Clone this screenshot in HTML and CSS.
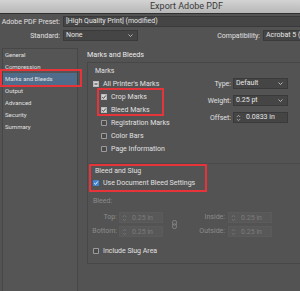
FILE: index.html
```html
<!DOCTYPE html>
<html>
<head>
<meta charset="utf-8">
<title>Export Adobe PDF</title>
<link rel="stylesheet" href="styles.css">
</head>
<body>
<div class="dialog">
  <div class="titlebar">Export Adobe PDF</div>

  <div class="toprow row1">
    <span class="tlabel">Adobe PDF Preset:</span>
    <div class="field preset">[High Quality Print] (modified)</div>
  </div>

  <div class="toprow row2">
    <span class="tlabel">Standard:</span>
    <div class="field select std"><span>None</span><svg class="chev" width="5" height="3" viewBox="0 0 5 3"><path d="M0.5 0.5 L2.5 2.5 L4.5 0.5" fill="none" stroke="#d0d0d0" stroke-width="0.8"/></svg></div>
    <span class="compat-label">Compatibility:</span>
    <div class="field select compat"><span>Acrobat 5 (PDF 1.4)</span></div>
  </div>

  <div class="main">
    <ul class="sidebar">
      <li>General</li>
      <li>Compression</li>
      <li class="sel">Marks and Bleeds</li>
      <li>Output</li>
      <li>Advanced</li>
      <li>Security</li>
      <li>Summary</li>
    </ul>

    <div class="content">
      <div class="heading">Marks and Bleeds</div>
      <div class="box">
        <div class="marks">
          <div class="marks-left">
            <div class="group-label">Marks</div>
            <div class="check"><span class="cb cb-light"><svg width="6" height="6" viewBox="0 0 6 6"><path d="M1.5 3 H4.5" stroke="#333" stroke-width="1"/></svg></span>All Printer's Marks</div>
            <div class="hl hl-marks">
              <div class="check sub"><span class="cb cb-light"><svg width="6" height="6" viewBox="0 0 6 6"><path d="M1.2 3.1 L2.5 4.4 L4.8 1.5" fill="none" stroke="#333" stroke-width="0.9"/></svg></span>Crop Marks</div>
              <div class="check sub"><span class="cb cb-light"><svg width="6" height="6" viewBox="0 0 6 6"><path d="M1.2 3.1 L2.5 4.4 L4.8 1.5" fill="none" stroke="#333" stroke-width="0.9"/></svg></span>Bleed Marks</div>
            </div>
            <div class="check sub"><span class="cb"></span>Registration Marks</div>
            <div class="check sub"><span class="cb"></span>Color Bars</div>
            <div class="check sub"><span class="cb"></span>Page Information</div>
          </div>
          <div class="marks-right">
            <div class="frow">
              <span class="flabel">Type:</span>
              <div class="field select w55"><span>Default</span><svg width="5" height="3" viewBox="0 0 5 3"><path d="M0.5 0.5 L2.5 2.5 L4.5 0.5" fill="none" stroke="#d0d0d0" stroke-width="0.8"/></svg></div>
            </div>
            <div class="frow">
              <span class="flabel">Weight:</span>
              <div class="field select w55"><span>0.25 pt</span><svg width="5" height="3" viewBox="0 0 5 3"><path d="M0.5 0.5 L2.5 2.5 L4.5 0.5" fill="none" stroke="#d0d0d0" stroke-width="0.8"/></svg></div>
            </div>
            <div class="frow">
              <span class="flabel">Offset:</span>
              <div class="field spinfield w55"><span class="spin spin-on"><svg width="5" height="8" viewBox="0 0 5 8"><path d="M0.8 3 L2.5 1.3 L4.2 3 M0.8 5 L2.5 6.7 L4.2 5" fill="none" stroke="#bdbdbd" stroke-width="0.8"/></svg></span><span>0.0833 in</span></div>
            </div>
          </div>
        </div>

        <div class="bleed">
          <div class="hl hl-bleed">
            <div class="group-label gl-bleed">Bleed and Slug</div>
            <div class="check bcheck"><span class="cb cb-blue"><svg width="6" height="6" viewBox="0 0 6 6"><path d="M1.2 3.1 L2.5 4.4 L4.8 1.5" fill="none" stroke="#fff" stroke-width="0.9"/></svg></span>Use Document Bleed Settings</div>
          </div>
          <div class="bleed-label">Bleed:</div>
          <div class="bleed-grid">
            <span class="blabel">Top:</span>
            <div class="dis"><span class="spin"><svg width="5" height="8" viewBox="0 0 5 8"><path d="M0.8 3 L2.5 1.3 L4.2 3 M0.8 5 L2.5 6.7 L4.2 5" fill="none" stroke="#7a7a7a" stroke-width="0.8"/></svg></span><span>0.25 in</span></div>
            <div class="chain"><svg width="5" height="9" viewBox="0 0 5 9"><rect x="0.5" y="0.5" width="4" height="4.6" rx="1.6" fill="none" stroke="#8a8a8a" stroke-width="0.8"/><rect x="0.5" y="3.9" width="4" height="4.6" rx="1.6" fill="none" stroke="#8a8a8a" stroke-width="0.8"/></svg></div>
            <span class="blabel wide">Inside:</span>
            <div class="dis"><span class="spin"><svg width="5" height="8" viewBox="0 0 5 8"><path d="M0.8 3 L2.5 1.3 L4.2 3 M0.8 5 L2.5 6.7 L4.2 5" fill="none" stroke="#7a7a7a" stroke-width="0.8"/></svg></span><span>0.25 in</span></div>
            <span class="blabel">Bottom:</span>
            <div class="dis"><span class="spin"><svg width="5" height="8" viewBox="0 0 5 8"><path d="M0.8 3 L2.5 1.3 L4.2 3 M0.8 5 L2.5 6.7 L4.2 5" fill="none" stroke="#7a7a7a" stroke-width="0.8"/></svg></span><span>0.25 in</span></div>
            <span class="blabel wide">Outside:</span>
            <div class="dis"><span class="spin"><svg width="5" height="8" viewBox="0 0 5 8"><path d="M0.8 3 L2.5 1.3 L4.2 3 M0.8 5 L2.5 6.7 L4.2 5" fill="none" stroke="#7a7a7a" stroke-width="0.8"/></svg></span><span>0.25 in</span></div>
          </div>
          <div class="check slug"><span class="cb"></span>Include Slug Area</div>
        </div>
      </div>
    </div>
  </div>
</div>
</body>
</html>
```

FILE: styles.css
```css
* { box-sizing: border-box; margin: 0; padding: 0; }
html, body { width: 300px; height: 291px; overflow: hidden; }
body {
  background: #535353;
  font-family: Roboto, "Liberation Sans", sans-serif;
  font-size: 7px;
  color: #e0e0e0;
}
.dialog { width: 300px; height: 291px; overflow: hidden; }

.titlebar {
  height: 14px;
  line-height: 13px;
  padding-left: 150px;
  font-size: 9px;
  color: #3a3a3a;
  background: linear-gradient(#d3d3d3, #b7b7b7);
  border-bottom: 1px solid #2f2f2f;
}

.toprow { display: flex; align-items: center; height: 11px; white-space: nowrap; }
.row1 { margin-top: 2px; }
.row2 { margin-top: 3px; }
.tlabel { width: 60px; flex-shrink: 0; text-align: right; margin-right: 3px; }

.field {
  height: 11px;
  line-height: 9px;
  border: 1px solid #3a3a3a;
  background: #454545;
  padding-left: 2px;
  flex-shrink: 0;
  white-space: nowrap;
  overflow: hidden;
  color: #e6e6e6;
}
.preset { width: 260px; }
.select { display: flex; align-items: center; justify-content: space-between; padding-right: 4px; }
.std { width: 75px; }
.compat-label { width: 44px; flex-shrink: 0; text-align: right; margin-left: 78px; margin-right: 3px; }
.compat { width: 80px; }

.main { display: flex; align-items: flex-start; margin-top: 7px; }

.sidebar {
  list-style: none;
  margin-left: 2px;
  width: 76px;
  height: 250px;
  flex-shrink: 0;
  border: 1px solid #474747;
  background: #555555;
  font-size: 6px;
}
.sidebar li { height: 12px; line-height: 12px; padding-left: 2px; white-space: nowrap; }
.sidebar .sel { background: #4f6c8b; position: relative; }
.sidebar .sel::after {
  content: "";
  position: absolute;
  left: -3px; right: -5px; top: -4px; bottom: -2px;
  border: 2px solid #e6343a;
}

.content { margin-left: 9px; flex: 1; min-width: 0; }
.heading { height: 14px; line-height: 14px; font-size: 7.2px; color: #ebebeb; }
.box {
  height: 202px;
  border: 1px solid #474747;
  border-right: none;
}

.marks { display: flex; height: 100px; }
.marks-left { width: 103px; flex-shrink: 0; padding-top: 2px; }
.group-label { height: 12px; line-height: 12px; padding-left: 7px; }
.check { display: flex; align-items: center; height: 13px; padding-left: 5px; white-space: nowrap; }
.check.sub { padding-left: 13px; }

.cb {
  width: 6px; height: 6px;
  flex-shrink: 0;
  margin-right: 4px;
  border-radius: 1px;
  background: #4a4a4a;
  box-shadow: inset 0 0 0 1px #9c9c9c;
  display: flex;
}
.cb-light { background: #d6d6d6; box-shadow: inset 0 0 0 1px #b9b9b9; }
.cb-blue { background: #3d84d6; box-shadow: none; }

.hl { position: relative; }
.hl-marks::after {
  content: "";
  position: absolute;
  left: 9px; width: 63px; top: -2px; bottom: 0;
  border: 2px solid #e6343a;
}

.marks-right { padding-top: 15px; }
.frow { display: flex; align-items: center; height: 11px; margin-bottom: 6px; white-space: nowrap; }
.flabel { width: 40px; text-align: right; margin-right: 2px; flex-shrink: 0; }
.w55 { width: 55px; }
.spinfield { display: flex; align-items: center; padding-left: 2px; }
.spin { display: flex; width: 5px; height: 8px; margin-right: 5px; flex-shrink: 0; }
.spin-on { box-shadow: 2px 0 0 -1px transparent; }

.bleed { height: 100px; border-top: 1px solid #4b4b4b; padding-top: 2px; }
.gl-bleed { height: 11px; line-height: 11px; }
.bcheck { height: 12px; }
.hl-bleed::after {
  content: "";
  position: absolute;
  left: 1px; width: 114px; top: -2px; bottom: -3px;
  border: 2px solid #e6343a;
}
.bleed-label { height: 12px; line-height: 12px; margin-top: 6px; padding-left: 5px; color: #8c8c8c; }

.bleed-grid {
  display: grid;
  grid-template-columns: 31px 44px 23px 42px 44px;
  grid-template-rows: 11px 11px;
  row-gap: 3px;
  margin-top: 5px;
}
.blabel { text-align: right; padding-right: 2px; line-height: 11px; color: #8c8c8c; white-space: nowrap; }
.blabel.wide { padding-right: 3px; }
.dis {
  display: flex; align-items: center;
  height: 11px;
  border: 1px solid #5b5b5b;
  background: #585858;
  color: #7c7c7c;
  padding-left: 2px;
  white-space: nowrap;
}
.chain { grid-column: 3; grid-row: 1 / span 2; display: flex; align-items: center; justify-content: center; }

.slug { height: 12px; margin-top: 8px; }
```
